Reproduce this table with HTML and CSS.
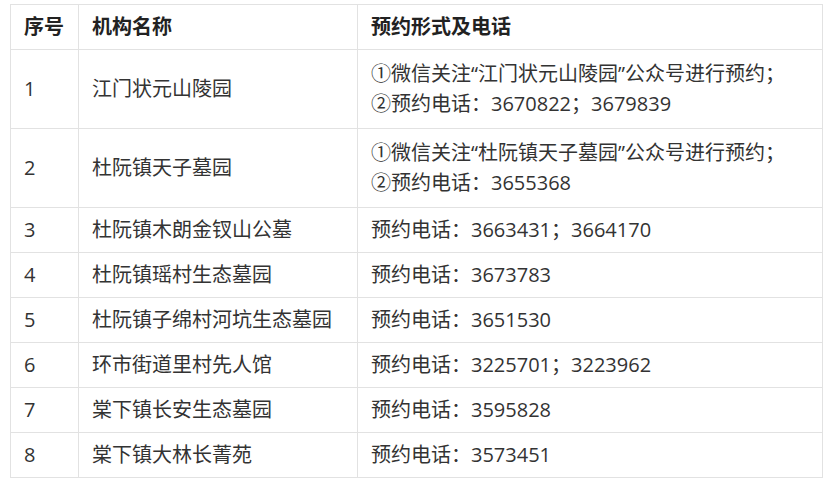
FILE: index.html
```html
<!DOCTYPE html>
<html lang="zh-CN">
<head>
<meta charset="utf-8">
<title>预约</title>
<link rel="stylesheet" href="styles.css">
</head>
<body>
<table class="tbl">
  <colgroup>
    <col class="c1"><col class="c2"><col class="c3">
  </colgroup>
  <thead>
    <tr class="head"><th>序号</th><th>机构名称</th><th>预约形式及电话</th></tr>
  </thead>
  <tbody>
    <tr class="dbl"><td>1</td><td>江门状元山陵园</td><td><div class="ln">①微信关注“江门状元山陵园”公众号进行预约；</div><div class="ln">②预约电话：3670822；3679839</div></td></tr>
    <tr class="dbl"><td>2</td><td>杜阮镇天子墓园</td><td><div class="ln">①微信关注“杜阮镇天子墓园”公众号进行预约；</div><div class="ln">②预约电话：3655368</div></td></tr>
    <tr class="one"><td>3</td><td>杜阮镇木朗金钗山公墓</td><td>预约电话：3663431；3664170</td></tr>
    <tr class="one"><td>4</td><td>杜阮镇瑶村生态墓园</td><td>预约电话：3673783</td></tr>
    <tr class="one"><td>5</td><td>杜阮镇子绵村河坑生态墓园</td><td>预约电话：3651530</td></tr>
    <tr class="one"><td>6</td><td>环市街道里村先人馆</td><td>预约电话：3225701；3223962</td></tr>
    <tr class="one"><td>7</td><td>棠下镇长安生态墓园</td><td>预约电话：3595828</td></tr>
    <tr class="one"><td>8</td><td>棠下镇大林长菁苑</td><td>预约电话：3573451</td></tr>
  </tbody>
</table>
</body>
</html>
```
FILE: styles.css
```css
html, body {
  margin: 0;
  padding: 0;
  background: #ffffff;
}
body {
  padding: 4px 0 0 10px;
  font-family: "Open Sans", "Noto Sans CJK SC", sans-serif;
  color: #333333;
}
.tbl {
  border-collapse: collapse;
  width: 812px;
  table-layout: fixed;
  font-size: 20px;
}
.c1 { width: 68px; }
.c2 { width: 279px; }
.c3 { width: 465px; }
.tbl th, .tbl td {
  border: 1px solid #e2e2e2;
  padding: 0 0 0 13px;
  text-align: left;
  vertical-align: middle;
  line-height: 30px;
}
.tbl th {
  font-weight: 700;
  color: #222222;
}
.head { height: 45px; }
.one { height: 45px; }
.dbl { height: 79px; }
.ln { line-height: 30px; }
```
